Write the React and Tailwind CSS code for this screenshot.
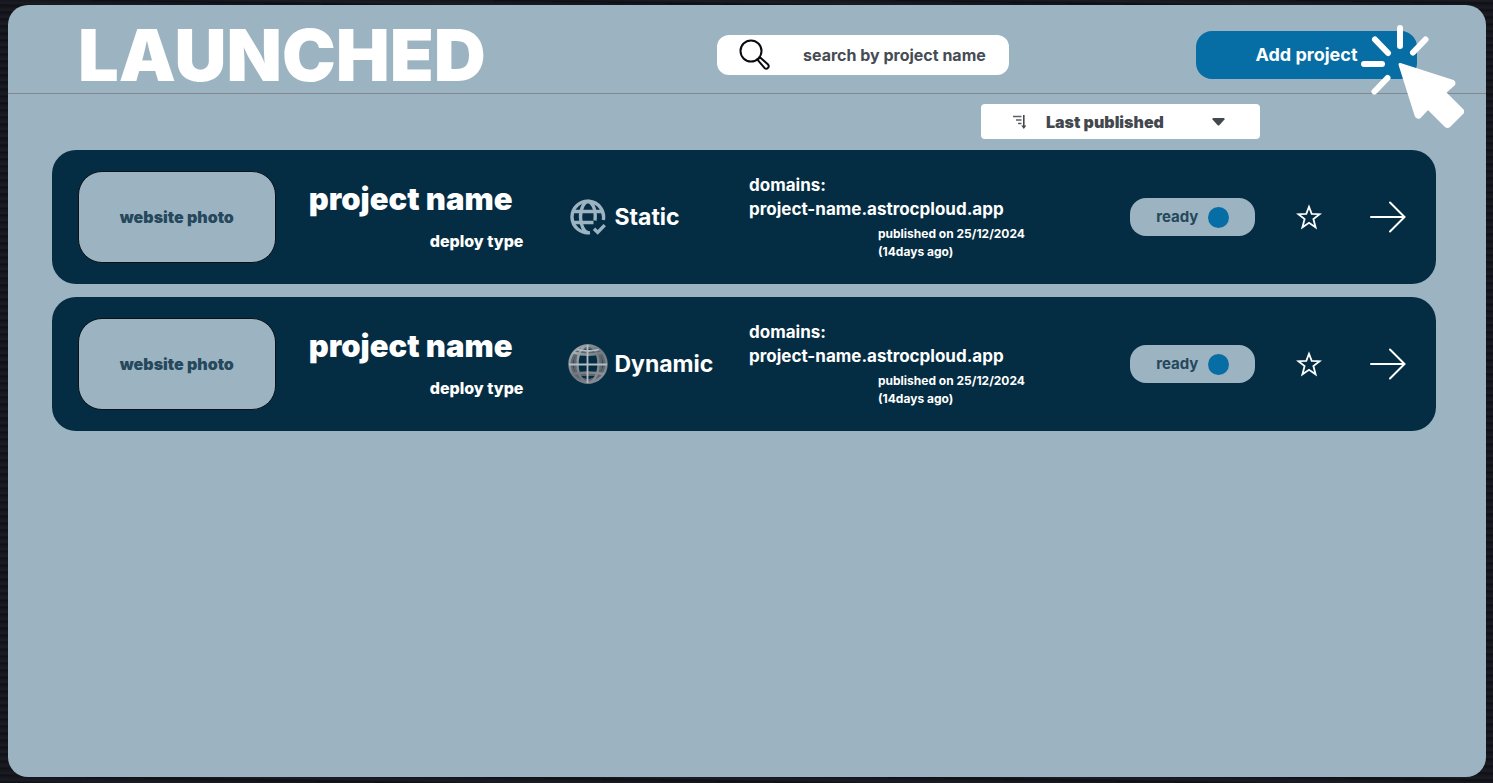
const projects = [
  { id: "static", kind: "Static" },
  { id: "dynamic", kind: "Dynamic" },
];

function SearchIcon() {
  return (
    <svg viewBox="0 0 32 32" className="size-8 shrink-0" fill="none" stroke="#0b0b0f" strokeWidth="2" strokeLinecap="round" strokeLinejoin="round" aria-hidden="true">
      <circle cx="12" cy="12" r="10.5" />
      <path d="M18.6 20.2c1-.2 1.900-.9 2.300-2l8.200 7.400a2.500 2.500 0 0 1-3.400 3.600l-7.100-8.400z" />
    </svg>
  );
}

function ClickCursor() {
  return (
    <svg viewBox="0 0 104 104" className="size-26" aria-hidden="true">
      <g stroke="#fff" strokeWidth="6" strokeLinecap="round">
        <path d="M39 3v18M14 14.500l13 13.500M64.500 14.500L52 27.500M3 39h18M26.500 53L13.500 66.500" />
      </g>
      <path fill="#fff" stroke="#fff" strokeWidth="3" strokeLinejoin="round" d="M39 39.500L92 56.500Q94 58 92 60L83.500 67.500L101.500 85.500Q102 87.500 101 88L88 101Q86.500 102 85 101L67 83L58.500 92Q56 93 55 90Z" />
    </svg>
  );
}

function SortIcon() {
  return (
    <svg viewBox="0 0 14 16" className="h-4 w-3.5" fill="none" stroke="#5b6066" aria-hidden="true">
      <path strokeWidth="1.500" d="M0 2.500h8.500M3 6h5.500M5 9.500h3.500" />
      <path stroke="#43484e" strokeWidth="1.600" d="M10.800 1v11.500" />
      <path fill="#43484e" stroke="none" d="M8.300 11.500h5L10.800 15z" />
    </svg>
  );
}

function GlobeCheckIcon() {
  return (
    <svg viewBox="0 0 36 36" className="size-9" fill="none" stroke="#9cb3c1" strokeWidth="3.400" aria-hidden="true">
      <path d="M33.300 21A15.800 15.800 0 1 0 20 33.600" />
      <path d="M25 21.500C26.500 8 21 2.500 18 2.500C15 2.500 10.500 8 10.500 18C10.500 27 14.500 33.500 18 33.500" />
      <path d="M3.500 12.500h29M3.500 23.500h20" />
      <path d="M24 29.700l3.700 3.700l7-7.300" />
    </svg>
  );
}

function WireGlobeIcon() {
  return (
    <svg viewBox="0 0 40 40" className="size-10" fill="none" aria-hidden="true">
      <defs>
        <linearGradient id="steel" x1="0" y1="0" x2="1" y2="1">
          <stop offset="0" stopColor="#a9b3ba" />
          <stop offset=".5" stopColor="#6f777f" />
          <stop offset="1" stopColor="#8f949a" />
        </linearGradient>
      </defs>
      <g stroke="#5f656c" strokeWidth="3">
        <circle cx="20" cy="20" r="16.500" />
        <ellipse cx="20" cy="20" rx="13" ry="17" />
        <path d="M7 9.500h26M9 30.500h22" />
      </g>
      <g stroke="url(#steel)" strokeWidth="2.400">
        <circle cx="20" cy="20" r="18.500" />
        <ellipse cx="20" cy="20" rx="10.500" ry="18.500" />
        <path d="M5 8.500Q20 13 35 8.500M4 30Q20 27 36 30" />
      </g>
      <path stroke="#b4bdc3" strokeWidth="1.800" d="M19.500 1v38M1 20.500h38M9 5.500Q20 8.500 31 5.500" />
    </svg>
  );
}

function StarIcon() {
  return (
    <svg viewBox="0 0 26 26" className="size-6.5" fill="none" stroke="#fff" strokeWidth="1.800" aria-hidden="true">
      <path d="M13 2.800L15.700 9.900L23.600 10.200L17.400 15L19.600 23.300L13 18.800L6.400 23.300L8.600 15L2.400 10.200L10.300 9.900Z" />
    </svg>
  );
}

function ArrowIcon() {
  return (
    <svg viewBox="0 0 36 32" className="h-8 w-9" fill="none" stroke="#fff" strokeWidth="2" strokeLinecap="round" aria-hidden="true">
      <path d="M1 16h33.500M20 1.500L34.500 16L20 30.500" />
    </svg>
  );
}

function ProjectRow({ kind }) {
  return (
    <li className="grid grid-cols-[197fr_33fr_259fr_180fr_380fr_165fr_74fr_36fr] items-center rounded-3xl bg-[#042d43] py-[21px] pr-[30px] pl-[26px] text-white">
      <div className="flex h-[92px] items-center justify-center rounded-3xl border border-[#0b1118] bg-[#9cb3c1] text-base font-black text-[#25485c]">
        website photo
      </div>
      <div className="col-start-3">
        <h2 className="text-[31px]/9 font-black">project name</h2>
        <p className="mt-3 pl-[121px] text-base/6 font-extrabold">deploy type</p>
      </div>
      <div className="flex items-center gap-1.5 text-[23px]/8 font-bold">
        <span className="flex w-10 shrink-0 justify-center">
          {kind === "Static" ? <GlobeCheckIcon /> : <WireGlobeIcon />}
        </span>
        {kind}
      </div>
      <div className="font-bold">
        <p className="text-[17px]/6">domains:</p>
        <p className="text-[17px]/6">project-name.astrocploud.app</p>
        <p className="mt-1 pl-[129px] text-xs/[18px]">
          published on 25/12/2024
          <br />
          (14days ago)
        </p>
      </div>
      <div>
        <button type="button" className="flex h-[38px] w-[125px] items-center gap-2.5 rounded-2xl bg-[#9cb3c1] pl-[26px] text-[15px] font-bold text-[#25485c]">
          ready
          <span className="size-[21px] rounded-full bg-[#066da5]" />
        </button>
      </div>
      <button type="button" aria-label="Add to favourites" className="justify-self-start">
        <StarIcon />
      </button>
      <a href="#project" aria-label="Open project">
        <ArrowIcon />
      </a>
    </li>
  );
}

export default function App() {
  return (
    <div className="flex min-h-screen flex-col bg-[#15161d] bg-[repeating-linear-gradient(1deg,#0d0e13_0px,#1b1c24_3px,#13141a_7px)] pt-[5px] pr-[7px] pb-[6px] pl-2 font-['Inter','Liberation_Sans',sans-serif]">
      <main className="flex grow flex-col rounded-[20px] bg-[#9cb3c1]">
        <header className="grid h-[89px] grid-cols-[639fr_292fr_187fr_221fr] items-center border-b border-[#84878d] pt-3 pr-[69px] pl-[70px]">
          <h1 className="text-[72px]/[76px] font-black text-white">LAUNCHED</h1>
          <label className="flex h-10 items-center gap-8 rounded-xl bg-white pr-4 pl-[22px]">
            <SearchIcon />
            <input type="text" aria-label="search by project name" placeholder="search by project name" className="w-full min-w-0 text-base font-bold outline-none placeholder:text-[#454c54] placeholder:opacity-100" />
          </label>
          <div className="relative col-start-4">
            <button type="button" className="h-12 w-full rounded-2xl bg-[#066da5] text-lg font-bold text-white">
              Add project
            </button>
            <span className="pointer-events-none absolute -top-1.5 -right-12">
              <ClickCursor />
            </span>
          </div>
        </header>
        <div className="flex justify-end pt-2.5 pr-[226px]">
          <div className="relative">
            <select aria-label="Sort projects" className="block h-[35px] w-[279px] appearance-none rounded bg-white pl-[65px] text-base font-black text-[#43484e]">
              <option>Last published</option>
            </select>
            <span className="pointer-events-none absolute inset-0 flex items-center justify-between pr-[35px] pl-8">
              <SortIcon />
              <svg viewBox="0 0 13 8" className="h-2 w-[13px]" aria-hidden="true">
                <path fill="#43484e" d="M1 0h11q1 .5.500 1.500L7.500 7q-1 1-2 0L.5 1.500Q0 .5 1 0z" />
              </svg>
            </span>
          </div>
        </div>
        <ul className="flex flex-col gap-[13px] pt-[11px] pr-[50px] pb-6 pl-11">
          {projects.map((project) => (
            <ProjectRow key={project.id} kind={project.kind} />
          ))}
        </ul>
      </main>
    </div>
  );
}
